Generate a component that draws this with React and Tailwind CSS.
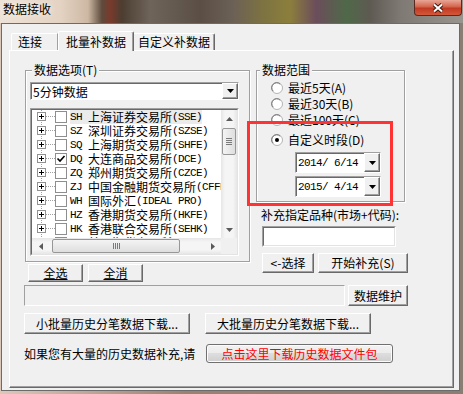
import React from "react";

const T = "font-['Noto_Sans_CJK_SC',sans-serif] text-[12px] leading-[14px] text-black";
const M = "font-['Liberation_Mono',monospace] text-[11px] leading-[14px] tracking-[-0.6px] text-black";

const markets = [
  { code: "SH", name: "上海证券交易所", abbr: "(SSE)", hot: true },
  { code: "SZ", name: "深圳证券交易所", abbr: "(SZSE)" },
  { code: "SQ", name: "上海期货交易所", abbr: "(SHFE)" },
  { code: "DQ", name: "大连商品交易所", abbr: "(DCE)", checked: true },
  { code: "ZQ", name: "郑州期货交易所", abbr: "(CZCE)" },
  { code: "ZJ", name: "中国金融期货交易所", abbr: "(CFFEX)" },
  { code: "WH", name: "国际外汇", abbr: "(IDEAL PRO)" },
  { code: "HZ", name: "香港期货交易所", abbr: "(HKFE)" },
  { code: "HK", name: "香港联合交易所", abbr: "(SEHK)" },
  { code: "MG", name: "美国期货交易所", abbr: "(CME)" },
];

function Btn({ className = "", children }) {
  return (
    <button
      type="button"
      className={`flex items-center justify-center bg-[#f0f0f0] border border-t-white border-l-white border-r-[#696969] border-b-[#696969] shadow-[inset_-1px_-1px_0_#a0a0a0] ${T} ${className}`}>
      {children}
    </button>
  );
}

function Sunken({ className = "", inner = "", children }) {
  return (
    <div className={`border border-t-[#a0a0a0] border-l-[#a0a0a0] border-r-white border-b-white ${className}`}>
      <div className={`w-full h-full border border-t-[#696969] border-l-[#696969] border-r-[#e3e3e3] border-b-[#e3e3e3] ${inner}`}>
        {children}
      </div>
    </div>
  );
}

function DropBtn() {
  return (
    <div className="w-[16px] h-full flex items-center justify-center bg-[#f0f0f0] border border-t-white border-l-white border-r-[#696969] border-b-[#696969] shadow-[inset_-1px_-1px_0_#a0a0a0]">
      <svg width="7" height="4" viewBox="0 0 7 4">
        <path d="M0 0h7L3.5 4z" fill="#000" />
      </svg>
    </div>
  );
}

// combobox / date picker: outer sunken line, dropdown button inside
function Combo({ className = "", text, mono = false }) {
  return (
    <div className={`flex bg-white border border-t-[#a0a0a0] border-l-[#a0a0a0] border-r-white border-b-white ${className}`}>
      <div className="flex-1 flex items-center border-t border-l border-t-[#696969] border-l-[#696969] pl-[1px]">
        <span className={mono ? M : T}>{text}</span>
      </div>
      <DropBtn />
    </div>
  );
}

function GroupBox({ label, className = "", boxClass = "", children }) {
  return (
    <div className={`relative pt-[7px] ${className}`}>
      <div className={`border border-[#a0a0a0] shadow-[inset_1px_1px_0_#fff,1px_1px_0_#fff] ${boxClass}`}>{children}</div>
      <span className={`absolute top-0 px-[2px] bg-[#f0f0f0] ${T} ${label.left}`}>{label.text}</span>
    </div>
  );
}

function Radio({ label, checked = false, className = "" }) {
  return (
    <div className={`flex items-center gap-[5px] h-[14px] ${className}`}>
      <svg width="12" height="12" viewBox="0 0 12 12" className="shrink-0">
        <circle cx="6" cy="6" r="5.5" fill="#fff" stroke="#b4b4b4" />
        <path d="M2.2 9.2A4.6 4.6 0 0 1 9.2 2.2" fill="none" stroke="#707070" />
        {checked && <circle cx="6" cy="6" r="2" fill="#000" />}
      </svg>
      <span className={T}>{label}</span>
    </div>
  );
}

function TreeRow({ m }) {
  return (
    <div className="flex items-center h-[14px] whitespace-nowrap">
      <svg width="18" height="14" viewBox="0 0 18 14" className="shrink-0">
        <line x1="4.5" y1="0" x2="4.5" y2="14" stroke="#a0a0a0" strokeDasharray="1 1" />
        <line x1="9" y1="6.5" x2="18" y2="6.5" stroke="#a0a0a0" strokeDasharray="1 1" />
        <rect x="0.5" y="2.5" width="8" height="8" fill="#fff" stroke="#919191" />
        <path d="M2 6.5h5M4.5 4v5" stroke="#000" />
      </svg>
      <div className="w-[12px] h-[12px] shrink-0 border border-[#8e8e8e] bg-white flex items-center justify-center">
        {m.checked && (
          <svg width="10" height="10" viewBox="0 0 10 10">
            <path d="M1.5 4.5l2.5 2.5 4.5-5" fill="none" stroke="#000" strokeWidth="1.6" />
          </svg>
        )}
      </div>
      <span className={`ml-[3px] flex items-center ${m.hot ? "bg-[#ebebeb]" : ""}`}>
        <span className={M}>{m.code}&nbsp;</span>
        <span className={T}>{m.name}</span>
        <span className={M}>{m.abbr}</span>
      </span>
    </div>
  );
}

function VScroll() {
  return (
    <div className="w-[16px] h-full flex flex-col bg-[linear-gradient(90deg,#e6e6e6,#f5f5f5_25%,#f5f5f5_75%,#e6e6e6)]">
      <div className="h-[17px] flex items-center justify-center">
        <svg width="7" height="4" viewBox="0 0 7 4">
          <path d="M0 4h7L3.5 0z" fill="#5a5a5a" />
        </svg>
      </div>
      <div className="mt-[1px] mx-[1px] h-[27px] rounded-[2px] border border-[#979797] bg-[linear-gradient(90deg,#f4f4f4,#dedede)] flex flex-col items-center justify-center gap-[1px]">
        <div className="w-[6px] h-[1px] bg-[#7a7a7a]" />
        <div className="w-[6px] h-[1px] bg-[#7a7a7a]" />
        <div className="w-[6px] h-[1px] bg-[#7a7a7a]" />
        <div className="w-[6px] h-[1px] bg-[#7a7a7a]" />
      </div>
      <div className="flex-1" />
      <div className="h-[17px] flex items-center justify-center">
        <svg width="7" height="4" viewBox="0 0 7 4">
          <path d="M0 0h7L3.5 4z" fill="#5a5a5a" />
        </svg>
      </div>
    </div>
  );
}

function HScroll() {
  return (
    <div className="flex-1 h-full flex items-stretch bg-[linear-gradient(#e6e6e6,#f5f5f5_25%,#f5f5f5_75%,#e6e6e6)]">
      <div className="w-[17px] flex items-center justify-center">
        <svg width="4" height="7" viewBox="0 0 4 7">
          <path d="M4 0v7L0 3.5z" fill="#5a5a5a" />
        </svg>
      </div>
      <div className="ml-[3px] my-[1px] w-[128px] rounded-[2px] border border-[#979797] bg-[linear-gradient(#f4f4f4,#dedede)] flex items-center justify-center gap-[1px]">
        <div className="w-[1px] h-[6px] bg-[#7a7a7a]" />
        <div className="w-[1px] h-[6px] bg-[#7a7a7a]" />
        <div className="w-[1px] h-[6px] bg-[#7a7a7a]" />
        <div className="w-[1px] h-[6px] bg-[#7a7a7a]" />
      </div>
      <div className="flex-1" />
      <div className="w-[17px] flex items-center justify-center">
        <svg width="4" height="7" viewBox="0 0 4 7">
          <path d="M0 0v7L4 3.5z" fill="#5a5a5a" />
        </svg>
      </div>
    </div>
  );
}

export default function App() {
  return (
    <div className="relative w-[463px] h-[394px] overflow-hidden bg-[linear-gradient(90deg,#dcc8b9,#9a8272_40%,#8a7d73)]">
      {/* Title bar */}
      <div className="h-[23px] flex items-start bg-[linear-gradient(90deg,#eee2d6_0px,#e4d3c3_60px,#cdb8a4_88px,#5e4a3b_102px,#7a3a2c_110px,#4c3d31_122px,#6e645a_150px,#5b4f45_200px,#6b6056_232px,#7c7242_262px,#8c7f3c_290px,#6b4d5c_316px,#4f6948_346px,#5e5a52_370px,#7f7973_400px,#9a948f_463px)]">
        <span className={`pl-[3px] pt-[2px] ${T} [text-shadow:0_0_6px_#fff]`}>数据接收</span>
        <div className="ml-auto mr-[1px] w-[48px] h-[16px] rounded-b-[4px] border border-t-0 border-[#5a2a20] bg-[linear-gradient(#e8a697,#d4644d_45%,#c13a21_55%,#d4583c)] flex items-center justify-center">
          <svg width="12" height="10" viewBox="0 0 12 10">
            <path d="M2 1.5l8 7M10 1.5l-8 7" stroke="#3d1a12" strokeWidth="4" />
            <path d="M2 1.5l8 7M10 1.5l-8 7" stroke="#fff" strokeWidth="2" />
          </svg>
        </div>
      </div>

      {/* Client area */}
      <div className="ml-[1px] w-[459px] h-[368px] border border-[#6b6b6b] bg-[#f0f0f0] pl-[7px] pt-[7px]">
        {/* Tabs */}
        <div className="flex items-end h-[19px] pl-[2px]">
          <div className={`w-[47px] h-[17px] flex items-center pl-[6px] rounded-tl-[2px] border border-b-0 border-t-white border-l-white border-r-[#a0a0a0] ${T}`}>连接</div>
          <div className={`relative z-10 w-[76px] h-[20px] -mb-[1px] flex items-center justify-center rounded-t-[2px] bg-[#f0f0f0] border border-b-0 border-t-white border-l-white border-r-[#696969] shadow-[inset_-1px_0_0_#a0a0a0] ${T}`}>批量补数据</div>
          <div className={`w-[81px] h-[17px] flex items-center justify-center rounded-tr-[2px] border border-b-0 border-l-0 border-t-white border-r-[#696969] shadow-[inset_-1px_0_0_#a0a0a0] ${T}`}>自定义补数据</div>
        </div>

        {/* Tab panel */}
        <div className="w-[445px] h-[338px] border border-t-white border-l-white border-r-[#696969] border-b-[#696969] shadow-[inset_-1px_-1px_0_#a0a0a0] pl-[14px] pt-[12px]">
          <div className="flex items-start">
            {/* Left column */}
            <div className="w-[226px]">
              <GroupBox label={{ text: "数据选项(T)", left: "left-[7px]" }} className="ml-[1px] w-[225px]" boxClass="h-[192px] pl-[4px] pt-[11px]">
                <Combo className="w-[209px] h-[18px]" text="5分钟数据" />
                <Sunken className="mt-[8px] w-[209px] h-[148px] bg-white" inner="flex flex-col">
                  <div className="flex flex-1 min-h-0">
                    <div className="flex-1 overflow-hidden pl-[5px]">
                      {markets.map((m) => (
                        <TreeRow key={m.code} m={m} />
                      ))}
                    </div>
                    <VScroll />
                  </div>
                  <div className="flex h-[16px]">
                    <HScroll />
                    <div className="w-[16px] bg-[#f0f0f0]" />
                  </div>
                </Sunken>
              </GroupBox>
              <div className="mt-[2px] ml-[4px] flex gap-[5px]">
                <Btn className="w-[55px] h-[18px]">
                  <span className="underline underline-offset-[1px]">全选</span>
                </Btn>
                <Btn className="w-[55px] h-[18px]">
                  <span className="underline underline-offset-[1px]">全消</span>
                </Btn>
              </div>
            </div>

            {/* Right column */}
            <div className="ml-[6px] w-[152px]">
              <GroupBox label={{ text: "数据范围", left: "left-[4px]" }} className="w-[149px]" boxClass="h-[132px] pl-[14px] pt-[10px]">
                <div className="flex flex-col gap-[2px]">
                  <Radio label="最近5天(A)" />
                  <Radio label="最近30天(B)" />
                  <Radio label="最近100天(C)" />
                </div>
                <Radio className="mt-[6px]" label="自定义时段(D)" checked />
                <Combo className="mt-[5px] ml-[24px] w-[86px] h-[21px]" text="2014/ 6/14" mono />
                <Combo className="mt-[3px] ml-[24px] w-[86px] h-[21px]" text="2015/ 4/14" mono />
              </GroupBox>
              <div className={`mt-[6px] ml-[5px] whitespace-nowrap ${T}`}>补充指定品种(市场+代码):</div>
              <Sunken className="mt-[4px] ml-[6px] w-[134px] h-[21px] bg-white" />
              <div className="mt-[6px] ml-[6px] flex gap-[4px]">
                <Btn className="w-[52px] h-[20px]">&lt;-选择</Btn>
                <Btn className="w-[90px] h-[20px]">开始补充(S)</Btn>
              </div>
            </div>
          </div>

          {/* Progress row */}
          <div className="mt-[3px] flex items-start">
            <div className="w-[321px] h-[21px] border border-t-[#a0a0a0] border-l-[#a0a0a0] border-r-white border-b-white" />
            <Btn className="ml-[3px] w-[60px] h-[21px]">数据维护</Btn>
          </div>

          {/* Download buttons */}
          <div className="mt-[7px] flex gap-[15px]">
            <Btn className="w-[166px] h-[21px]">小批量历史分笔数据下载...</Btn>
            <Btn className="w-[166px] h-[21px]">大批量历史分笔数据下载...</Btn>
          </div>

          {/* Bottom row */}
          <div className="mt-[10px] flex items-center">
            <span className={`w-[182px] whitespace-nowrap ${T}`}>如果您有大量的历史数据补充,请</span>
            <button
              type="button"
              className="w-[187px] h-[19px] rounded-[3px] border border-[#707070] bg-[linear-gradient(#f2f2f2,#ebebeb_50%,#dddddd_50%,#cfcfcf)] shadow-[inset_0_0_0_1px_#fcfcfc] flex items-center justify-center font-['Noto_Sans_CJK_SC',sans-serif] text-[12px] leading-[14px] text-[#ff0000]">
              点击这里下载历史数据文件包
            </button>
          </div>
        </div>
      </div>

      {/* Red annotation frame */}
      <div className="absolute left-[247px] top-[121px] w-[146px] h-[85px] border-[3px] border-[#ff3333]" />
    </div>
  );
}
